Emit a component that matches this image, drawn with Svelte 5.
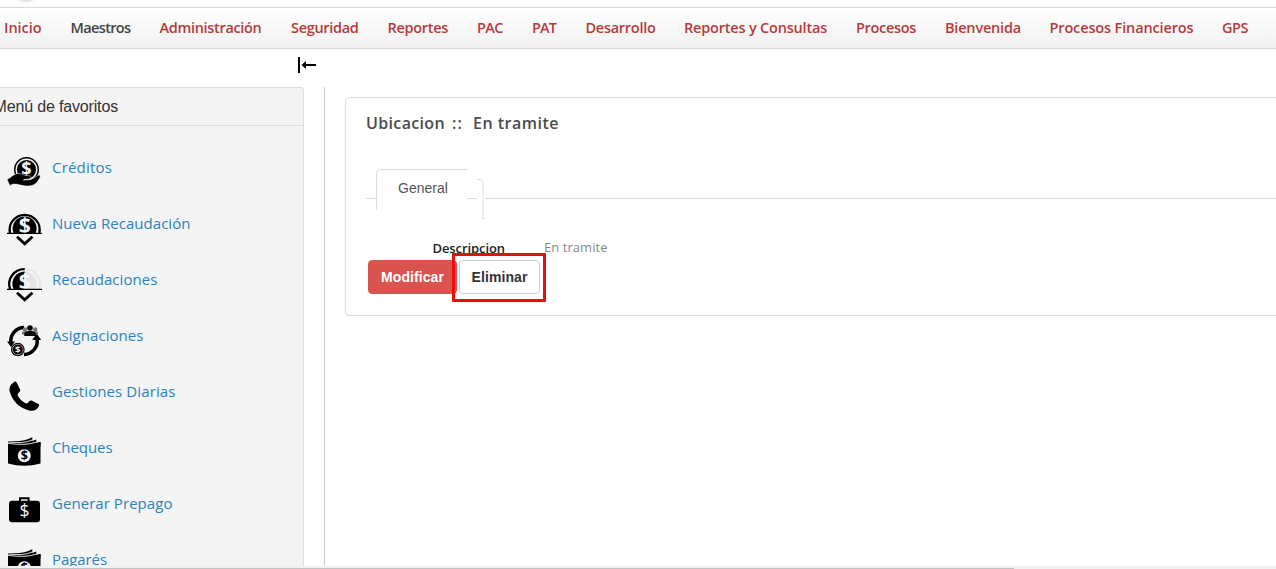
<script>
  const nav = [
    ['Inicio', 37.500, 66.5], ['Maestros', 60, 89], ['Administración', 102, 131.5],
    ['Seguridad', 67.500, 96.5], ['Reportes', 60.500, 89.5], ['PAC', 26, 55], ['PAT', 24, 53.5],
    ['Desarrollo', 70, 98.5], ['Reportes y Consultas', 143, 172], ['Procesos', 60, 89],
    ['Bienvenida', 76, 104.5], ['Procesos Financieros', 144, 172.5], ['GPS', 26, 54]
  ];
  const favorites = [
    ['Créditos', 60, 'hand'], ['Nueva Recaudación', 138.500, 'collect'],
    ['Recaudaciones', 105.500, 'partial'], ['Asignaciones', 91.500, 'cycle'],
    ['Gestiones Diarias', 123.500, 'phone'], ['Cheques', 60.500, 'notes'],
    ['Generar Prepago', 120.500, 'case'], ['Pagarés', 55, 'notes']
  ];

  // Spreads the letters so that a label takes the given width.
  function fit(node, width) {
    const natural = node.getBoundingClientRect().width;
    node.style.letterSpacing = (width - natural) / node.textContent.length + 'px';
  }
</script>

<div class="page">
  <div class="masthead"><span class="logo"></span></div>
  <nav>
    {#each nav as [label, width, step]}
      <a href="#top" class:current={label === 'Maestros'} style="width: {step}px"><span use:fit={width}>{label}</span></a>
    {/each}
  </nav>
  <div class="toolbar">
    <svg width="20" height="18" viewBox="0 0 20 18">
      <path d="M1 0h2v16H1z" />
      <path d="M4.500 8l4.500-4v3h10v2H9v3z" />
    </svg>
  </div>

  <div class="columns">
    <aside>
      <h2><span use:fit={124.5}>Menú de favoritos</span></h2>
      <ul>
        {#each favorites as [label, width, icon]}
          <li>
            <svg width="38" height="38" viewBox="0 0 38 38">
              {#if icon === 'hand'}
                <circle cx="20.500" cy="17.500" r="12.500" />
                <circle cx="20.500" cy="17.500" r="10.300" fill="none" stroke="#f4f4f4" stroke-width="1.400" />
                <text x="20.500" y="23" font-size="18">$</text>
                <path d="M1 27.500C6 25 8 21.500 13 21.500c3 0 5 2.500 10 2.300 2.500 0 2.500 3 0 3.200l-5 .5 7-.2c4-1 6-4 8-4.300 1.500 0 1.500 1.500.8 3C31 31 28 34 22 34c-6 0-9-2-14-2-2 0-3 .8-4 1.700z" stroke="#f4f4f4" stroke-width=".5" />
                <path d="M17 28l7-.4q2-.5 2-1.800" fill="none" stroke="#f4f4f4" stroke-width=".7" />
              {:else if icon === 'collect'}
                <path d="M4 25A15 15 0 1 1 33.300 25" fill="none" stroke="#000" stroke-width="2.300" />
                <path d="M7.500 25A12 12 0 1 1 29.700 25z" />
                <text x="18.700" y="25" font-size="21">$</text>
                <path d="M1 24.700h35v1.200H1z" />
                <path d="M11 28.800l7.700 7 7.700-7" fill="none" stroke="#000" stroke-width="2.800" />
              {:else if icon === 'partial'}
                <path d="M18.700 5.200A15 15 0 0 1 33.300 25" fill="none" stroke="#e8e8e8" stroke-width="2.300" />
                <path d="M18.700 7.500A12.300 12.300 0 0 1 29.700 25h-11z" fill="#e4e4e4" />
                <path d="M4 25A15 15 0 0 1 18.700 5.200" fill="none" stroke="#000" stroke-width="2.300" />
                <path d="M7.500 25A12.300 12.300 0 0 1 18.700 7.500V25z" />
                <text x="18.700" y="25" font-size="21">$</text>
                <path d="M1 24.700h35v1.200H1z" />
                <path d="M11 28.800l7.700 7 7.700-7" fill="none" stroke="#000" stroke-width="2.800" />
              {:else if icon === 'cycle'}
                <path d="M18 7.500A13.500 13.500 0 0 0 4.800 22M31 18.500A13.500 13.500 0 0 1 18 34.500" fill="none" stroke="#000" stroke-width="3.500" />
                <path d="M1 21.500h8L5 27zM26.200 20h9l-4.500-6.500z" />
                <circle cx="19" cy="9.500" r="2.200" fill="#777" /><circle cx="29.200" cy="9.500" r="2.200" fill="#777" />
                <path d="M16 14.500v-2q0-1.500 3-1.500h10.500q2.500 0 2.500 1.500v2z" fill="#777" />
                <circle cx="24" cy="8" r="2.800" />
                <path d="M18.300 16v-2.500q0-1.500 4.200-2.500h3q4.300 1 4.300 2.500V16z" />
                <circle cx="11.800" cy="29.500" r="6.800" />
                <circle cx="11.800" cy="29.500" r="5.300" fill="none" stroke="#d4d4d4" stroke-width=".7" />
                <text x="11.800" y="33" font-size="9.500">$</text>
              {:else if icon === 'phone'}
                <path d="M8.500 5.700Q10 5.200 10.800 7l3.300 6.500q.5 1.300-.5 2.300L11.700 18q-.4.700 0 1.500Q14.500 25 20 27.400q.8.300 1.300-.2l2.200-2.300q.8-.8 2-.3l6.800 3.400q1.200.7.700 2Q30.500 35.500 24 34.700 8 31 3.500 15 2.500 9.500 8.500 5.700z" />
              {:else if icon === 'notes'}
                <path d="M2 11.500q16 4 32.500-1.500v21.500q-16 4.500-32.500 0z" />
                <path d="M2 9Q17 10.500 26.300 5v4l4-1.500V11l4.200-1V15H2z" />
                <path d="M2 9.900Q17 12 26.500 8M2 11.300Q20 14 30.500 10" fill="none" stroke="#f4f4f4" stroke-width=".9" />
                <circle cx="18.300" cy="23.700" r="6.500" fill="#f4f4f4" />
                <text class="dark" x="18.300" y="28" font-size="12.500">$</text>
              {:else}
                <path d="M14 14v-3.700h8.600V14" fill="none" stroke="#000" stroke-width="2" />
                <rect x="3" y="12.800" width="31" height="21.400" rx="3" />
                <text class="thin" x="18.500" y="29.300" font-size="17.500">$</text>
              {/if}
            </svg>
            <a href="#top"><span use:fit={width}>{label}</span></a>
          </li>
        {/each}
      </ul>
    </aside>

    <main>
      <section>
        <h1><span use:fit={79}>Ubicacion</span><span use:fit={11}>::</span><span use:fit={86}>En tramite</span></h1>
        <svg class="tabs" width="920" height="52" viewBox="0 0 920 52" fill="none" stroke="#ddd">
          <path d="M0 30.500h10.500M10.500 42V5.500q0-4 4-4H102M101 30.500h10M111 11.500h2q4 0 4 4V50.500h2M119 30.500H920" />
          <text x="32" y="25">General</text>
        </svg>
        <div class="field">
          <b><span use:fit={72.5}>Descripcion</span></b>
          <span class="value"><span use:fit={63.5}>En tramite</span></span>
        </div>
        <div class="actions">
          <button class="danger"><span use:fit={63}>Modificar</span></button>
          <div class="marked"><button><span use:fit={56}>Eliminar</span></button></div>
        </div>
      </section>
    </main>
  </div>
  <div class="scroll"><i></i></div>
</div>

<style>
  :global(body) { background: #fff; overflow: hidden; }
  * { box-sizing: border-box; }
  .page { width: 1276px; height: 569px; overflow: hidden; display: flex; flex-direction: column; font-family: "Open Sans", sans-serif; }
  a { text-decoration: none; }
  span { white-space: nowrap; }
  .masthead { flex: none; height: 7px; overflow: hidden; padding-left: 14px; }
  .logo { display: block; width: 24px; height: 22px; margin-top: -20px; border-radius: 50%; background: #ddd; filter: blur(1px); }
  nav { flex: none; display: flex; align-items: center; height: 42px; padding-left: 4px; border-top: 1px solid #d8d8d8; border-bottom: 1px solid #d8d8d8; background: linear-gradient(#fff, #f1f1f1); }
  nav a { flex: none; color: #b73a3b; font-size: 14.5px; font-weight: 600; line-height: 20px; }
  nav a.current { color: #444; }
  .toolbar { flex: none; height: 38px; padding: 8px 0 0 297px; }
  .toolbar svg { display: block; }
  .columns { flex: 1; min-height: 0; display: flex; }
  aside { flex: none; width: 314px; margin-left: -10px; overflow: hidden; border: 1px solid #ddd; border-bottom: 0; border-radius: 4px 4px 0 0; background: #f4f4f4; }
  h2 { margin: 0; height: 38px; padding-left: 2.500px; border-bottom: 1px solid #ddd; font: 16px/37px "Liberation Sans", sans-serif; color: #333; }
  ul { list-style: none; margin: 0; padding: 26px 0 0 15px; }
  li { display: flex; gap: 8px; height: 56px; }
  li svg { flex: none; overflow: visible; }
  li text { fill: #f4f4f4; font-family: "Open Sans", sans-serif; font-weight: 700; text-anchor: middle; }
  li text.dark { fill: #000; }
  li text.thin { font-weight: 400; }
  li a { color: #2a83c0; font-size: 15px; line-height: 30px; }
  main { flex: 1; min-width: 0; margin-left: 20px; padding: 10px 0 0 20px; border-left: 1px solid #ccc; }
  section { width: 960px; height: 219px; padding: 14px 0 0 20px; border: 1px solid #ddd; border-radius: 4px; }
  h1 { display: flex; gap: 7px; margin: 0; height: 22px; color: #4b4b4b; font-size: 16px; font-weight: 600; line-height: 22px; }
  h1 span:last-child { margin-left: 3px; }
  .tabs { display: block; margin-top: 34px; }
  .tabs text { fill: #555; stroke: none; font: 14px "Liberation Sans", sans-serif; }
  .field { display: flex; height: 40px; padding: 17px 0 0 66.5px; font-size: 13px; line-height: 20px; color: #222; }
  .field b { width: 111.500px; font-weight: 600; line-height: 22px; }
  .value { color: #888; }
  .actions { display: flex; padding-left: 2px; align-items: flex-start; margin-top: -7px; }
  button { height: 34px; padding: 0; border: 1px solid #ccc; border-radius: 4px; background: #fff; color: #333; font: bold 14px "Liberation Sans", sans-serif; }
  .danger { width: 89px; margin-top: 7px; border-color: #d9534f; background: #d9534f; color: #fff; }
  .marked { position: relative; width: 94px; height: 49px; margin-left: -5px; padding: 4px; border: 3px solid #ee0b0b; border-radius: 1px; }
  .marked button { display: block; width: 81px; }
  .scroll { flex: none; height: 3px; padding-top: 2px; background: #f0f0f0; }
  .scroll i { display: block; width: 1014px; height: 1px; background: #c1c1c1; }
</style>
